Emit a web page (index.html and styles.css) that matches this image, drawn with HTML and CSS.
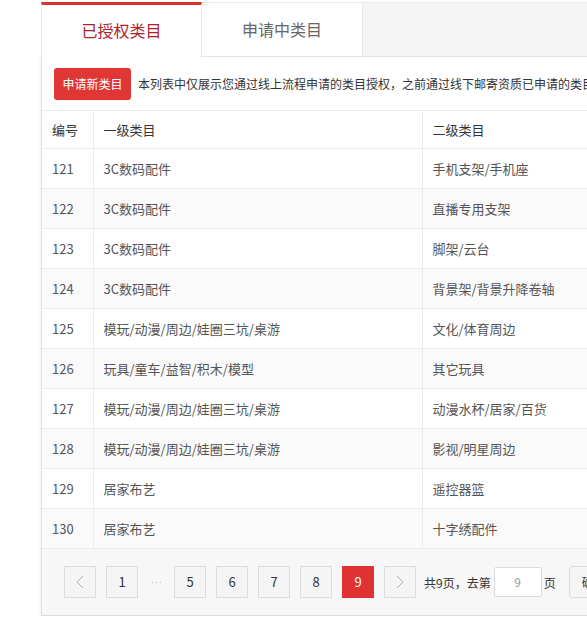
FILE: index.html
```html
<!DOCTYPE html>
<html lang="zh-CN">
<head>
<meta charset="utf-8">
<title>类目管理</title>
<link rel="stylesheet" href="styles.css">
</head>
<body>
<div class="panel">
  <div class="tabs">
    <div class="tab active">已授权类目</div>
    <div class="tab">申请中类目</div>
    <div class="tab-fill"></div>
  </div>
  <div class="content">
    <div class="toolbar">
      <button class="btn-apply">申请新类目</button>
      <span class="tip">本列表中仅展示您通过线上流程申请的类目授权，之前通过线下邮寄资质已申请的类目授权不在此列表中展示</span>
    </div>
    <table class="grid">
      <colgroup>
        <col class="c1"><col class="c2"><col class="c3">
      </colgroup>
      <thead>
        <tr><th>编号</th><th>一级类目</th><th>二级类目</th></tr>
      </thead>
      <tbody>
        <tr><td>121</td><td>3C数码配件</td><td>手机支架/手机座</td></tr>
        <tr><td>122</td><td>3C数码配件</td><td>直播专用支架</td></tr>
        <tr><td>123</td><td>3C数码配件</td><td>脚架/云台</td></tr>
        <tr><td>124</td><td>3C数码配件</td><td>背景架/背景升降卷轴</td></tr>
        <tr><td>125</td><td>模玩/动漫/周边/娃圈三坑/桌游</td><td>文化/体育周边</td></tr>
        <tr><td>126</td><td>玩具/童车/益智/积木/模型</td><td>其它玩具</td></tr>
        <tr><td>127</td><td>模玩/动漫/周边/娃圈三坑/桌游</td><td>动漫水杯/居家/百货</td></tr>
        <tr><td>128</td><td>模玩/动漫/周边/娃圈三坑/桌游</td><td>影视/明星周边</td></tr>
        <tr><td>129</td><td>居家布艺</td><td>遥控器篮</td></tr>
        <tr><td>130</td><td>居家布艺</td><td>十字绣配件</td></tr>
      </tbody>
    </table>
    <div class="pager">
      <span class="pg arrow"><svg width="8" height="14" viewBox="0 0 8 14"><polyline points="7,1 1,7 7,13" fill="none" stroke="#b0b0b0" stroke-width="1"/></svg></span>
      <span class="pg">1</span>
      <span class="dots"><i></i><i></i><i></i></span>
      <span class="pg">5</span>
      <span class="pg">6</span>
      <span class="pg">7</span>
      <span class="pg">8</span>
      <span class="pg current">9</span>
      <span class="pg arrow"><svg width="8" height="14" viewBox="0 0 8 14"><polyline points="1,1 7,7 1,13" fill="none" stroke="#b0b0b0" stroke-width="1"/></svg></span>
      <span class="total">共9页，去第</span>
      <span class="goto">9</span>
      <span class="unit">页</span>
      <span class="ok">确定</span>
    </div>
  </div>
</div>
</body>
</html>
```

FILE: styles.css
```css
html, body {
  margin: 0;
  padding: 0;
  background: #fff;
  overflow: hidden;
}
body {
  font-family: "Noto Sans CJK SC", "Open Sans", sans-serif;
  color: #333;
}
.panel {
  margin: 2px 0 0 41px;
  width: 680px;
}
.tabs {
  display: flex;
  height: 55px;
  box-sizing: border-box;
  border-top: 1px solid #ececec;
  border-bottom: 1px solid #e6e6e6;
  background: #f5f5f5;
}
.tab {
  width: 161px;
  box-sizing: border-box;
  background: #fff;
  border-right: 1px solid #e8e8e8;
  font-size: 16px;
  color: #666;
  text-align: center;
  line-height: 52px;
}
.tab:first-child {
  border-left: 1px solid #e6e6e6;
}
.tab.active {
  color: #ad222a;
  border-top: 3px solid #d9322f;
  margin-top: -1px;
  height: 56px;
  line-height: 51px;
  margin-bottom: -1px;
}
.tab-fill {
  flex: 1;
}
.content {
  border-left: 1px solid #e3e3e3;
  border-bottom: 1px solid #dcdcdc;
  box-shadow: -1px 0 2px rgba(0,0,0,0.06);
}
.toolbar {
  display: flex;
  align-items: center;
  gap: 7px;
  height: 53px;
  padding: 0 12px;
  box-sizing: border-box;
  white-space: nowrap;
  overflow: hidden;
}
.btn-apply {
  height: 32px;
  padding: 0 8.5px;
  border: none;
  border-radius: 3px;
  background: #e03636;
  color: #fff;
  font-family: inherit;
  font-size: 12px;
  line-height: 32px;
  flex: none;
}
.tip {
  font-size: 12px;
  color: #333;
}
.grid {
  width: 100%;
  border-collapse: collapse;
  table-layout: fixed;
}
.c1 { width: 51px; }
.c2 { width: 329px; }
.grid th, .grid td {
  text-align: left;
  padding: 0 10px;
  border-top: 1px solid #ececec;
  border-right: 1px solid #ececec;
  font-size: 13px;
  line-height: 20px;
  white-space: nowrap;
}
.grid th {
  height: 37px;
  font-weight: normal;
  color: #333;
}
.grid td {
  height: 39px;
  color: #555;
}
.grid tbody tr:nth-child(even) td {
  background: #fafafa;
}
.pager {
  display: flex;
  align-items: center;
  gap: 10px;
  height: 67px;
  box-sizing: border-box;
  padding-left: 22px;
  border-top: 1px solid #ececec;
  background: #f7f7f7;
  font-size: 12px;
  white-space: nowrap;
}
.pg {
  width: 32px;
  height: 32px;
  box-sizing: border-box;
  border: 1px solid #dcdcdc;
  background: #f5f5f5;
  color: #333;
  font-size: 13px;
  text-align: center;
  line-height: 30px;
  flex: none;
}
.pg.arrow {
  display: flex;
  align-items: center;
  justify-content: center;
}
.pg.current {
  background: #e03232;
  border-color: #e03232;
  color: #fff;
}
.dots {
  width: 16px;
  display: flex;
  justify-content: center;
  gap: 3px;
  flex: none;
}
.dots i {
  width: 1px;
  height: 1px;
  background: #b8b8b8;
}
.total {
  color: #333;
  margin-left: -2px;
  margin-right: -7px;
}
.goto {
  width: 48px;
  height: 30px;
  box-sizing: border-box;
  border: 1px solid #dcdcdc;
  border-radius: 2px;
  background: #fff;
  color: #999;
  text-align: center;
  line-height: 28px;
  flex: none;
}
.unit {
  margin-left: -8px;
}
.ok {
  height: 32px;
  box-sizing: border-box;
  border: 1px solid #dcdcdc;
  border-radius: 3px;
  background: #f5f5f5;
  padding: 0 12px;
  line-height: 30px;
  margin-left: 3px;
}
```
